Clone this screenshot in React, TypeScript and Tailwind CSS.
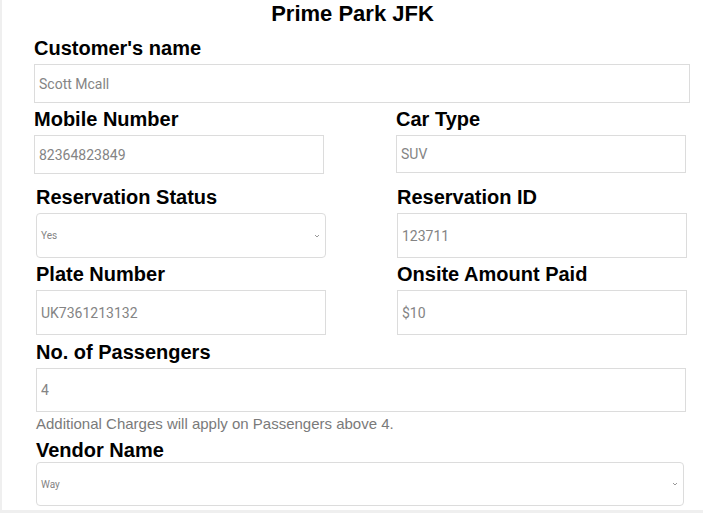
const label = "font-['Liberation_Sans',Arial,sans-serif] text-[20px] leading-[24px] font-bold text-black";
const field =
  "block border border-[#dcdcdc] bg-white px-[4px] font-['Roboto',sans-serif] text-[14px] text-[#848484] outline-none";

function Field({ value, className }: { value: string; className: string }) {
  return <input readOnly defaultValue={value} className={`${field} ${className}`} />;
}

function Select({ value, className }: { value: string; className: string }) {
  return (
    <div
      className={`flex items-center justify-between rounded-[4px] border border-[#dcdcdc] bg-white pl-[4px] pr-[5px] font-['Roboto',sans-serif] text-[10px] text-[#848484] ${className}`}
    >
      <span>{value}</span>
      <svg width="6" height="4" viewBox="0 0 6 4" className="text-[#999]">
        <path d="M1 1l2 2 2-2" fill="none" stroke="currentColor" strokeWidth="1" />
      </svg>
    </div>
  );
}

export default function App() {
  return (
    <div className="h-[513px] bg-[#efefef] pl-[2px] pb-[3px]">
      <div className="h-full bg-white">
        <h1 className="pt-[1px] text-center font-['Liberation_Sans',Arial,sans-serif] text-[22px] leading-[26px] font-bold text-black">
          Prime Park JFK
        </h1>

        <div className="pl-[32px]">
          <div className={`mt-[9px] ${label}`}>Customer's name</div>
          <Field value="Scott Mcall" className="mt-[4px] h-[39px] w-[656px]" />
        </div>

        <div className="mt-[4px] flex pl-[32px]">
          <div className="w-[362px]">
            <div className={label}>Mobile Number</div>
            <Field value="82364823849" className="mt-[4px] h-[39px] w-[290px]" />
          </div>
          <div>
            <div className={label}>Car Type</div>
            <Field value="SUV" className="mt-[4px] h-[38px] w-[290px]" />
          </div>
        </div>

        <div className="mt-[11px] flex pl-[34px]">
          <div className="w-[361px]">
            <div className={label}>Reservation Status</div>
            <Select value="Yes" className="mt-[4px] h-[45px] w-[290px]" />
          </div>
          <div>
            <div className={label}>Reservation ID</div>
            <Field value="123711" className="mt-[4px] h-[45px] w-[290px]" />
          </div>
        </div>

        <div className="mt-[4px] flex pl-[34px]">
          <div className="w-[361px]">
            <div className={label}>Plate Number</div>
            <Field value="UK7361213132" className="mt-[4px] h-[45px] w-[290px]" />
          </div>
          <div>
            <div className={label}>Onsite Amount Paid</div>
            <Field value="$10" className="mt-[4px] h-[45px] w-[290px]" />
          </div>
        </div>

        <div className="mt-[5px] pl-[34px]">
          <div className={label}>No. of Passengers</div>
          <Field value="4" className="mt-[4px] h-[44px] w-[650px]" />
          <p className="mt-[2px] font-['Liberation_Sans',Arial,sans-serif] text-[15px] leading-[20px] text-[#7a7a7a]">
            Additional Charges will apply on Passengers above 4.
          </p>
          <div className={`mt-[4px] ${label}`}>Vendor Name</div>
          <Select value="Way" className="h-[44px] w-[648px]" />
        </div>
      </div>
    </div>
  );
}
